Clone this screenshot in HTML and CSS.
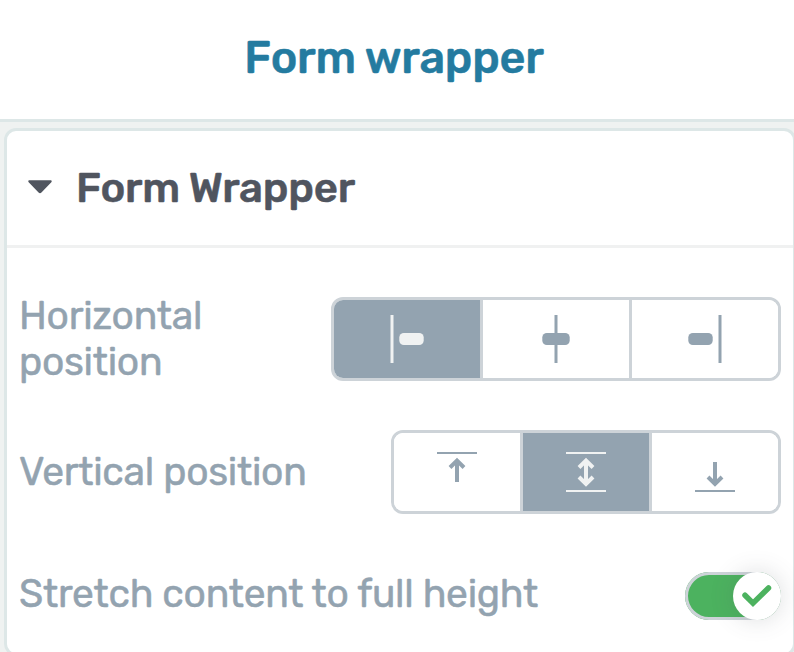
FILE: index.html
```html
<!DOCTYPE html>
<html lang="en">
  <head>
    <meta charset="UTF-8" />
    <meta name="viewport" content="width=device-width, initial-scale=1.0" />
    <title>Form wrapper</title>
    <link rel="stylesheet" href="styles.css">
  </head>
  <body>
    <header class="header">
      <h1 class="title">Form wrapper</h1>
    </header>
    <section class="card">
      <div class="card-head">
        <svg class="caret" width="24" height="14" viewBox="0 0 25 14">
          <path d="M1.5 0h22c1.2 0 1.6 1.2.8 2L14 12.8c-.9.9-2.1.9-3 0L.7 2C-.1 1.2.3 0 1.5 0z" />
        </svg>
        <h2 class="card-title">Form Wrapper</h2>
      </div>
      <div class="card-body">
        <div class="row">
          <span class="label">Horizontal<br />position</span>
          <div class="group group-wide">
            <button class="option active">
              <svg class="icon" viewBox="0 0 48 48">
                <rect x="7.5" width="3" height="48" />
                <rect x="16.3" y="18" width="24.4" height="12" rx="4.5" />
              </svg>
            </button>
            <button class="option">
              <svg class="icon" viewBox="0 0 48 48">
                <rect x="22.5" width="3" height="48" />
                <rect x="10.3" y="18" width="27.4" height="12" rx="4.5" />
              </svg>
            </button>
            <button class="option">
              <svg class="icon" viewBox="0 0 48 48">
                <rect x="7.3" y="18" width="24.4" height="12" rx="4.5" />
                <rect x="37.5" width="3" height="48" />
              </svg>
            </button>
          </div>
        </div>
        <div class="row">
          <span class="label">Vertical position</span>
          <div class="group">
            <button class="option">
              <svg class="icon" viewBox="0 0 48 48">
                <rect x="4" y="4" width="40" height="2" />
                <path class="stroke" d="M24 34V12M17 19.5 24 12.5l7 7" />
              </svg>
            </button>
            <button class="option active">
              <svg class="icon" viewBox="0 0 48 48">
                <rect x="4" y="4" width="40" height="2" />
                <path class="stroke" d="M24 12v24M17 19.5 24 12.5l7 7M17 29 24 36l7-7" />
                <rect x="4" y="42" width="40" height="2" />
              </svg>
            </button>
            <button class="option">
              <svg class="icon" viewBox="0 0 48 48">
                <path class="stroke" d="M24 14v22M17 29 24 36l7-7" />
                <rect x="4" y="42" width="40" height="2" />
              </svg>
            </button>
          </div>
        </div>
        <div class="row row-toggle">
          <span class="label">Stretch content to full height</span>
          <div class="toggle">
            <div class="knob">
              <svg width="32" height="24" viewBox="0 0 32 24">
                <path class="check" d="M4 11.2 12 19.2 27.5 4" />
              </svg>
            </div>
          </div>
        </div>
      </div>
    </section>
  </body>
</html>
```
FILE: styles.css
```css
* {
  box-sizing: border-box;
}
body {
  margin: 0;
  height: 652px;
  overflow: hidden;
  background: #eff2f1;
  font-family: Rubik, Roboto, sans-serif;
  letter-spacing: -0.3px;
  -webkit-text-stroke: 0.5px;
}
.header {
  height: 122px;
  padding: 0 6px 4px 0;
  display: flex;
  align-items: center;
  justify-content: center;
  background: white;
  border-bottom: 3px solid #dde7e7;
}
.title {
  margin: 0;
  font-size: 45px;
  font-weight: 500;
  color: #247ba0;
}
.card {
  width: 792px;
  height: 528px;
  margin: 6px 0 0 4px;
  background: white;
  border: 3px solid #dde7e7;
  border-radius: 12px;
}
.card-head {
  height: 117px;
  padding: 0 0 2px 21px;
  display: flex;
  align-items: center;
  gap: 24px;
  border-bottom: 3px solid #f0f1f1;
}
.caret {
  fill: #50555f;
}
.card-title {
  margin: 0;
  padding-top: 2px;
  font-size: 42px;
  font-weight: 500;
  color: #50555f;
}
.card-body {
  padding: 49px 12px 0;
  display: flex;
  flex-direction: column;
  gap: 49px;
}
.row {
  height: 84px;
  display: flex;
  align-items: center;
  justify-content: space-between;
}
.row-toggle {
  height: 48px;
  margin-top: 9px;
}
.label {
  font-size: 39px;
  line-height: 46px;
  color: #93a3b0;
  white-space: nowrap;
}
.row-toggle .label {
  padding-bottom: 4px;
}
.group {
  width: 390px;
  height: 84px;
  display: flex;
  border: 3px solid #cdd3d8;
  border-radius: 12px;
  overflow: hidden;
}
.group-wide {
  width: 450px;
}
.option {
  flex: 1;
  padding: 0;
  display: flex;
  align-items: center;
  justify-content: center;
  background: white;
  border: none;
  color: #93a3b0;
}
.option + .option {
  border-left: 3px solid #cdd3d8;
}
.option.active {
  background: #93a3b0;
  color: #f0f2f2;
}
.icon {
  width: 48px;
  height: 48px;
  fill: currentColor;
}
.stroke {
  fill: none;
  stroke: currentColor;
  stroke-width: 4;
}
.toggle {
  width: 96px;
  height: 48px;
  display: flex;
  justify-content: flex-end;
  background: #4cb25f;
  border-radius: 24px;
  box-shadow: inset 0 0 0 3px #cdd3d8;
}
.knob {
  width: 48px;
  height: 48px;
  display: flex;
  align-items: center;
  justify-content: center;
  background: white;
  border-radius: 50%;
  box-shadow: 0 0 24px rgba(80, 85, 95, 0.2);
}
.check {
  fill: none;
  stroke: #4cb25f;
  stroke-width: 5.5;
  stroke-linecap: round;
}
```
